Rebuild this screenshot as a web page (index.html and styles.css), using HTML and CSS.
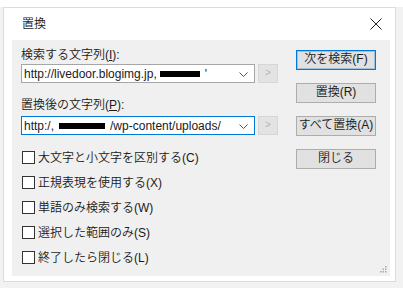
FILE: index.html
```
<!DOCTYPE html>
<html lang="ja">
<head>
  <meta charset="UTF-8" />
  <title>置換</title>
  <link rel="stylesheet" href="styles.css">
</head>
<body>
  <div class="topband"></div>
  <div class="dialog">
    <div class="titlebar">
      <span class="title">置換</span>
      <svg class="close" width="12" height="12" viewBox="0 0 12 12"><path d="M0.5 0.5L11.5 11.5M11.5 0.5L0.5 11.5" stroke="#222" stroke-width="1" fill="none"/></svg>
    </div>

    <div class="panel">
      <div class="left">
        <div class="label">検索する文字列(<u>I</u>):</div>
        <div class="row">
          <div class="combo">
            <span class="text">http://livedoor.blogimg.jp,</span><span class="mask mask1"></span><span class="text">'</span>
            <svg class="chev" width="9" height="5" viewBox="0 0 9 5"><path d="M0.5 0.5L4.5 4.5L8.5 0.5" stroke="#555" fill="none"/></svg>
          </div>
          <div class="arrow">&gt;</div>
        </div>

        <div class="label label2">置換後の文字列(<u>P</u>):</div>
        <div class="row">
          <div class="combo focus">
            <span class="text">http:/,</span><span class="mask mask2"></span><span class="text">/wp-content/uploads/</span>
            <svg class="chev" width="9" height="5" viewBox="0 0 9 5"><path d="M0.5 0.5L4.5 4.5L8.5 0.5" stroke="#555" fill="none"/></svg>
          </div>
          <div class="arrow">&gt;</div>
        </div>

        <ul class="checks">
          <li><span class="box"></span>大文字と小文字を区別する(C)</li>
          <li><span class="box"></span>正規表現を使用する(X)</li>
          <li><span class="box"></span>単語のみ検索する(W)</li>
          <li><span class="box"></span>選択した範囲のみ(S)</li>
          <li><span class="box"></span>終了したら閉じる(L)</li>
        </ul>
      </div>

      <div class="right">
        <div class="btn default">次を検索(F)</div>
        <div class="btn">置換(R)</div>
        <div class="btn">すべて置換(A)</div>
        <div class="btn close-btn">閉じる</div>
      </div>

      <svg class="grip" width="7" height="7" viewBox="0 0 7 7">
        <rect x="5" y="0" width="1.5" height="1.5" fill="#a8a8a8"/>
        <rect x="5" y="2.5" width="1.5" height="1.5" fill="#a8a8a8"/>
        <rect x="2.5" y="2.5" width="1.5" height="1.5" fill="#a8a8a8"/>
        <rect x="5" y="5" width="1.5" height="1.5" fill="#a8a8a8"/>
        <rect x="2.5" y="5" width="1.5" height="1.5" fill="#a8a8a8"/>
        <rect x="0" y="5" width="1.5" height="1.5" fill="#a8a8a8"/>
      </svg>
    </div>
  </div>
</body>
</html>
```

FILE: styles.css
```
* {
  margin: 0;
  padding: 0;
  box-sizing: border-box;
}

body {
  font-family: "Liberation Sans", "Noto Sans CJK JP", sans-serif;
  font-size: 12px;
  font-weight: 350;
  color: #1a1a1a;
  background: #f2f2f2;
  padding-left: 3px;
}

.topband {
  height: 7px;
  margin-left: -3px;
  background: #fff;
}

.dialog {
  width: 393px;
  height: 275px;
  background: #fff;
  border: 1px solid #dcdcdc;
  display: flex;
  flex-direction: column;
}

.titlebar {
  height: 32px;
  display: flex;
  align-items: center;
  justify-content: space-between;
  padding: 0 13px 0 18px;
}

.title {
  line-height: 16px;
}

.panel {
  position: relative;
  flex: 1;
  margin: 0 5px 5px 8px;
  background: #f0f0f0;
  display: flex;
  padding: 7px 0 0 9px;
}

.left {
  width: 257px;
}

.label {
  line-height: 16px;
  height: 17px;
}

.label2 {
  margin-top: 14px;
  height: 19px;
}

.row {
  display: flex;
  gap: 3px;
}

.combo {
  width: 234px;
  height: 19px;
  background: #fff;
  border: 1px solid #a6a6a6;
  display: flex;
  align-items: center;
  padding-left: 2px;
  position: relative;
  white-space: nowrap;
  overflow: hidden;
}

.combo.focus {
  border-color: #0078d7;
}

.combo .text {
  line-height: 16px;
}

.mask {
  display: inline-block;
  height: 6px;
  background: #000;
}

.mask1 {
  width: 40px;
  margin: 1px 5px 0 3px;
}

.mask2 {
  width: 46px;
  margin: 1px 5px 0 5px;
}

.chev {
  position: absolute;
  right: 6px;
  top: 7px;
}

.arrow {
  width: 20px;
  height: 19px;
  background: #e3e3e3;
  border: 1px solid #d6d6d6;
  color: #b4b4b4;
  font-size: 10px;
  text-align: center;
  line-height: 16px;
}

.checks {
  list-style: none;
  margin-top: 10px;
}

.checks li {
  height: 25px;
  display: flex;
  align-items: center;
  line-height: 16px;
}

.box {
  width: 13px;
  height: 13px;
  border: 1px solid #333;
  background: #fff;
  margin: 0 3px 0 1px;
}

.right {
  width: 80px;
  margin-left: 18px;
  padding-top: 3px;
}

.btn {
  height: 20px;
  background: #e1e1e1;
  border: 1px solid #adadad;
  text-align: center;
  line-height: 17px;
  margin-bottom: 13px;
}

.btn.default {
  border-color: #0078d7;
  box-shadow: inset 0 0 0 1px rgba(0, 120, 215, 0.3);
}

.close-btn {
  margin-top: 9px;
}

.grip {
  position: absolute;
  right: 3px;
  bottom: 3px;
}
```
